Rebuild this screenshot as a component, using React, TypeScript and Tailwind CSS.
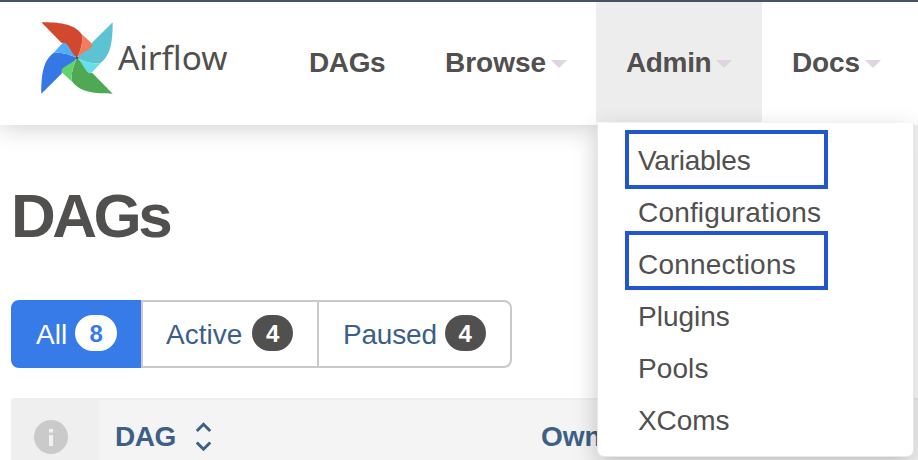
import React from 'react';

const blades = [
  { angle: 0, dark: '#d1482e', light: '#f07d60' },
  { angle: 90, dark: '#5bc3d1', light: '#68deeb' },
  { angle: 180, dark: '#4fa853', light: '#62d46d' },
  { angle: 270, dark: '#3677e6', light: '#50aef7' },
];

function Pinwheel() {
  return (
    <svg className="h-[72px] w-[72px] shrink-0" viewBox="-108 -108 216 216">
      {blades.map((b) => (
        <path
          key={b.dark}
          fill={b.dark}
          transform={`rotate(${b.angle})`}
          d="M-107 -107 C-58 -107 -8 -104 15 -70 C19 -48 10 -20 0 0 C-26 -16 -34 -50 -46 -45Z"
        />
      ))}
      {blades.map((b) => (
        <path
          key={b.light}
          fill={b.light}
          transform={`rotate(${b.angle})`}
          d="M15 -71 L44 -44 C55 -29 20 -22 0 0 C10 -20 19 -48 15 -71Z"
        />
      ))}
      <circle r="4" fill="#51504f" />
    </svg>
  );
}

function Caret() {
  return (
    <svg className="ml-[5px] mt-[2px] h-2 w-4" viewBox="0 0 16 8">
      <path d="M0 0H16L8 8Z" fill="#e0d3e2" />
    </svg>
  );
}

function NavItem({ label, className }: { label: string; className: string }) {
  return (
    <div className={`flex h-[120px] shrink-0 items-center whitespace-nowrap pt-[2px] text-[28px] font-bold ${className}`}>
      <span>{label}</span>
      {label !== 'DAGs' && <Caret />}
    </div>
  );
}

const menu = [
  { label: 'Variables', box: 'top-[-4px]', tracking: 'tracking-[-0.25px]' },
  { label: 'Configurations', box: '', tracking: 'tracking-[0.18px]' },
  { label: 'Connections', box: 'top-[-7px]', tracking: 'tracking-[0.2px]' },
  { label: 'Plugins', box: '', tracking: 'tracking-[0px]' },
  { label: 'Pools', box: '', tracking: 'tracking-[0.1px]' },
  { label: 'XComs', box: '', tracking: 'tracking-[-0.1px]' },
];

function AdminMenu() {
  return (
    <div className="absolute left-px top-[121px] h-[334px] w-[317px] rounded-b-[7px] border border-[#e8e8e8] border-t-white bg-white pt-[10px] shadow-[0_8px_24px_rgba(0,0,0,0.22)]">
      {menu.map((m) => (
        <div key={m.label} className={`relative flex h-[52px] items-center pl-10 pt-[2px] text-[28px] font-normal ${m.tracking}`}>
          {m.label}
          {m.box && <div className={`absolute left-[27px] h-[59px] w-[203px] border-4 border-[#2255d0] ${m.box}`} />}
        </div>
      ))}
    </div>
  );
}

function Filter({ label, count, className, badge }: { label: string; count: number; className: string; badge: string }) {
  return (
    <div className={`flex h-[68px] items-center border-2 text-[28px] ${className}`}>
      <span className="pt-[2px]">{label}</span>
      <span className={`mb-[2px] flex h-9 items-center justify-center rounded-full pt-px text-2xl font-bold tracking-normal ${badge}`}>{count}</span>
    </div>
  );
}

export default function App() {
  return (
    <div className="h-[460px] w-[918px] overflow-hidden bg-white font-['Liberation_Sans',Arial,sans-serif] text-[#51504f]">
      <header className="relative z-10 flex h-[125px] border-t-2 border-[#4a5166] bg-white shadow-[0_2px_24px_rgba(0,0,0,0.2)]">
        <div className="flex h-[112px] w-[279px] shrink-0 items-center pl-[41px]">
          <Pinwheel />
          <span className="ml-[5px] font-['Noto_Sans',sans-serif] text-[33.3px]">Airflow</span>
        </div>
        <NavItem label="DAGs" className="w-[136px] pl-[30px] tracking-[-0.4px]" />
        <NavItem label="Browse" className="w-[181px] pl-[30px]" />
        <div className="relative">
          <NavItem label="Admin" className="w-[166px] bg-[#ededed] pl-[30px] tracking-[-0.35px]" />
          <AdminMenu />
        </div>
        <NavItem label="Docs" className="w-[150px] pl-[30px] tracking-[-0.1px]" />
      </header>
      <main className="pl-[11px]">
        <h1 className="h-[175px] pt-[55px] text-[62px] font-bold leading-[72px] tracking-[-3.5px]">DAGs</h1>
        <div className="flex">
          <Filter label="All" count={8} className="w-[130px] rounded-l-[8px] border-[#377be8] bg-[#377be8] pl-[23px] text-white" badge="ml-[8px] w-[42px] bg-white text-[#377be8]" />
          <Filter label="Active" count={4} className="w-[176px] border-r-0 border-[#c9c9c9] pl-[23px] text-[#3d5f87]" badge="ml-[10px] w-[41px] bg-[#51504f] text-white" />
          <Filter label="Paused" count={4} className="w-[195px] rounded-r-[8px] border-[#c9c9c9] pl-[24px] tracking-[-0.2px] text-[#3d5f87]" badge="ml-[8px] w-[41px] bg-[#51504f] text-white" />
        </div>
        <div className="mt-[30px] flex h-[62px] rounded-tl-[4px] border-t-2 border-[#eeeeee] bg-[#f4f4f4] text-[28px] font-bold text-[#3d5f87]">
          <div className="flex w-[88px] justify-center rounded-tl-[4px] bg-[#efefef] pr-[9px] pt-5">
            <svg className="h-[34px] w-[34px]" viewBox="0 0 34 34">
              <circle cx="17" cy="17" r="17" fill="#cacaca" />
              <path d="M15 9h4v3.5h-4zM15 15h4v11h-4z" fill="#f1f1f1" />
            </svg>
          </div>
          <div className="flex w-[442px] pl-4 pt-4">
            <span className="h-10 w-[81px] leading-[42px] tracking-[-0.5px]">DAG</span>
            <svg className="mt-1 h-9 w-4" viewBox="0 0 16 36" fill="none" stroke="#3d5f87" strokeWidth="3">
              <path d="M.8 11 7.5 4.3 14.2 11M.8 22.5 7.5 29.2 14.2 22.5" />
            </svg>
          </div>
          <span className="pt-4 leading-[42px]">Owner</span>
        </div>
      </main>
    </div>
  );
}
